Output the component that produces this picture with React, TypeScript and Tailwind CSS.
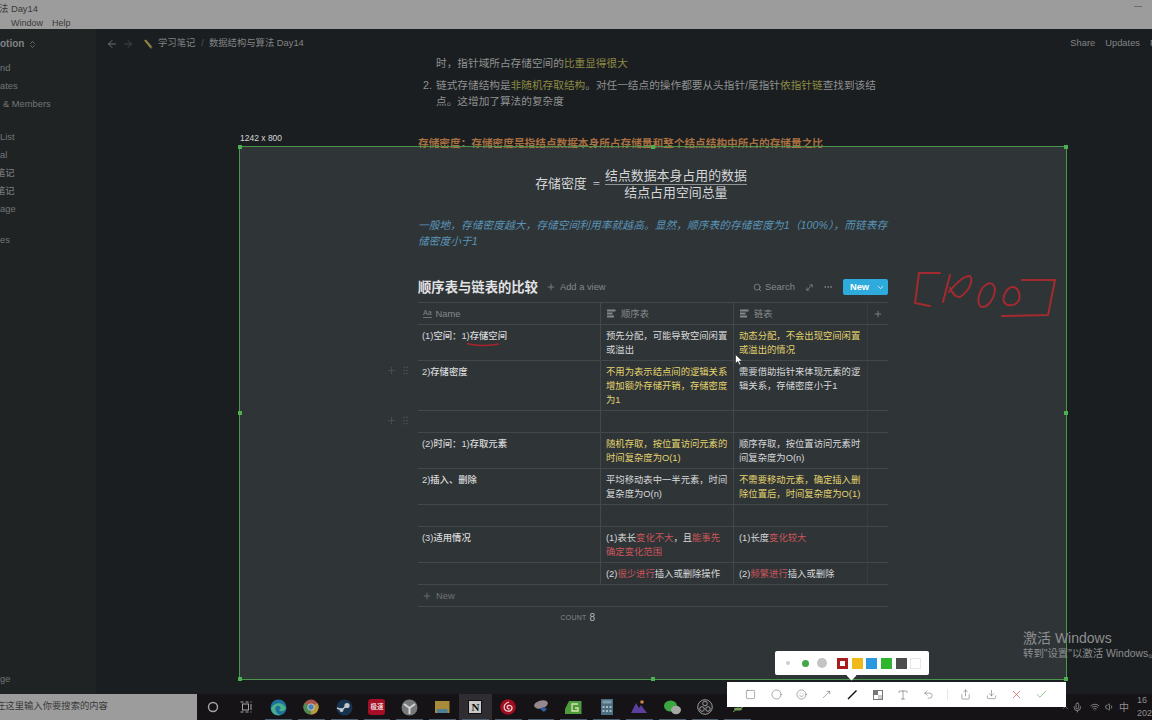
import { ArrowLeft, ArrowRight, Check, ChevronDown, ChevronsUpDown, Circle, Download, GripVertical, MoreHorizontal, MoveDiagonal, MoveUpRight, Plus, Search, Share, Smile, Square, Type, Undo2, X, Mic, Wifi, Volume1, ChevronUp } from 'lucide-react';
import type { ReactNode } from 'react';

const Y = ({ children }: { children: ReactNode }) => <span className="text-[#e2d36e]">{children}</span>;
const R = ({ children }: { children: ReactNode }) => <span className="text-[#c9565b]">{children}</span>;

const ColIcon = () => (
  <svg width="9" height="9" viewBox="0 0 9 9" className="shrink-0" fill="#85888a">
    <rect x="0" y="0.5" width="8.5" height="2" />
    <rect x="0" y="3.5" width="5.5" height="2" />
    <rect x="0" y="6.5" width="7" height="2" />
  </svg>
);

function Row({ h, name, a, b, grip }: { h: string; name?: ReactNode; a?: ReactNode; b?: ReactNode; grip?: boolean }) {
  return (
    <div className={`relative flex border-b border-[#43484b] ${h}`}>
      {grip && (
        <div className="absolute left-[-32px] top-[4px] flex items-center gap-[3px] text-[#4b4f51]">
          <Plus size={11} />
          <GripVertical size={11} />
        </div>
      )}
      <div className="w-[183px] shrink-0 border-r border-[#43484b] pl-[4px] pt-[4px] font-medium">{name}</div>
      <div className="w-[133px] shrink-0 border-r border-[#43484b] pl-[5px] pr-[2px] pt-[4px]">{a}</div>
      <div className="w-[134px] shrink-0 border-r border-[#383d40] pl-[5px] pr-[4px] pt-[4px]">{b}</div>
    </div>
  );
}

const Handle = ({ cls }: { cls: string }) => <div className={`absolute h-[4px] w-[4px] bg-[#4caf50] ${cls}`} />;

function Slot({ children, line = true, active }: { children?: ReactNode; line?: boolean; active?: boolean }) {
  return (
    <div className={`relative flex h-full w-[32.8px] shrink-0 items-center justify-center ${active ? 'bg-[#2f2d31]' : ''}`}>
      {children}
      {line && <div className="absolute bottom-0 left-[3px] right-[3px] h-[1px] bg-[#4f6274]" />}
    </div>
  );
}

export default function App() {
  return (
    <div className="relative flex h-[720px] w-[1152px] flex-col overflow-hidden bg-[#1b1e20] font-['Liberation_Sans','Noto_Sans_CJK_SC',sans-serif]">
      {/* screenshot tool selection, sits behind the page text */}
      <div className="absolute left-[239px] top-[146px] h-[533px] w-[827px] bg-[#2f3437]" />

      {/* title bar */}
      <div className="relative h-[29px] shrink-0 overflow-hidden bg-[#9c9c9c] text-[9px] leading-[14px] text-[#3a3a3a]">
        <div className="-ml-[1px] pt-[2px] text-[9.33px]">法 Day14</div>
        <div className="flex gap-[9px] pl-[11px]">
          <span>Window</span>
          <span>Help</span>
        </div>
        <div className="absolute left-[1134px] top-[6px] h-[1px] w-[8px] bg-[#6a6a6a]" />
      </div>

      <div className="relative flex min-h-0 flex-1">
        {/* sidebar */}
        <aside className="flex w-[96px] shrink-0 flex-col overflow-hidden bg-[#202324] pb-[6px] text-[9.33px] font-medium leading-[18px] text-[#727577]">
          <div className="flex h-[30px] shrink-0 items-center gap-[4px] text-[10px] font-bold text-[#7f8283]">
            otion <ChevronsUpDown size={9} />
          </div>
          <div className="h-[18px]">nd</div>
          <div className="h-[18px]">ates</div>
          <div className="mb-[15px] h-[18px] pl-[3px]">&amp; Members</div>
          <div className="h-[18px]">List</div>
          <div className="h-[18px]">al</div>
          <div className="-ml-[4px] h-[18px]">笔记</div>
          <div className="-ml-[4px] h-[18px]">笔记</div>
          <div className="mb-[13px] h-[18px]">age</div>
          <div className="h-[18px]">es</div>
          <div className="mt-auto h-[18px]">ge</div>
        </aside>

        <main className="relative min-w-0 flex-1">
          {/* breadcrumb bar */}
          <div className="flex h-[26px] items-center overflow-hidden pl-[10px] pt-[4px] text-[9.33px] text-[#818485]">
            <ArrowLeft size={12} strokeWidth={1.6} />
            <ArrowRight size={12} strokeWidth={1.6} className="ml-[4px] text-[#4c4f50]" />
            <svg width="10" height="10" viewBox="0 0 10 10" className="ml-[9px]">
              <path d="M1 1.5 L3 .5 L9 7.5 L7.5 9.5 Z" fill="#8f7f43" />
              <path d="M7.5 9.5 L9 7.5 L9.5 9.5 Z" fill="#555" />
            </svg>
            <span className="ml-[5px]">学习笔记</span>
            <span className="ml-[6px] text-[#55585a]">/</span>
            <span className="ml-[5px]">数据结构与算法 Day14</span>
            <div className="ml-auto flex gap-[10px]">
              <span>Share</span>
              <span>Updates</span>
              <span className="w-[2px] overflow-hidden">F</span>
            </div>
          </div>

          {/* page body */}
          <div className="ml-[322px] w-[470px] text-[10.67px] leading-[16px] text-[#8f9192]">
            <div className="pl-[18px]">
              时，指针域所占存储空间的<span className="text-[#8d8a45]">比重显得很大</span>
            </div>
            <div className="mt-[6px] flex">
              <span className="w-[18px] shrink-0 pl-[5px]">2.</span>
              <div className="w-[446px]">
                链式存储结构是<span className="text-[#8d8a45]">非随机存取结构</span>。对任一结点的操作都要从头指针/尾指针<span className="text-[#8d8a45]">依指针链</span>查找到该结点。这增加了算法的复杂度
              </div>
            </div>
            <div className="mt-[26px] font-bold text-[#a86f42]">存储密度：存储密度是指结点数据本身所占存储量和整个结点结构中所占的存储量之比</div>

            {/* formula */}
            <div className="mt-[12px] flex h-[42px] items-center justify-center pr-[24px] font-['Liberation_Serif','Noto_Sans_CJK_SC',serif] text-[12.9px] text-[#d5d6d7]">
              <span>存储密度</span>
              <span className="ml-[6px]">=</span>
              <div className="ml-[5px] flex flex-col items-center leading-[16px]">
                <div className="border-b border-[#8f9192]">结点数据本身占用的数据</div>
                <div>结点占用空间总量</div>
              </div>
            </div>

            <div className="mt-[12px] italic tracking-[0.1px] text-[#5a94b8]">一般地，存储密度越大，存储空间利用率就越高。显然，顺序表的存储密度为1（100%），而链表存储密度小于1</div>

            {/* database header */}
            <div className="mt-[30px] flex h-[23px] items-start">
              <div className="flex h-[16px] flex-1 items-center">
                <span className="pt-[2px] text-[13.33px] font-bold text-[#e2e3e4]">顺序表与链表的比较</span>
                <Plus size={10} className="ml-[8px] text-[#85888a]" />
                <span className="ml-[4px] text-[9.33px] text-[#85888a]">Add a view</span>
                <div className="ml-auto flex items-center text-[#85888a]">
                  <Search size={9} strokeWidth={2.2} />
                  <span className="ml-[3px] text-[9.5px]">Search</span>
                  <MoveDiagonal size={9} className="ml-[10px]" />
                  <MoreHorizontal size={10} className="ml-[9px]" />
                </div>
              </div>
              <div className="ml-[10px] flex h-[16px] w-[45px] items-center rounded-[2px] bg-[#2eaadc] text-[9.33px] font-bold text-white">
                <span className="flex-1 text-center">New</span>
                <ChevronDown size={9} className="mr-[3px]" />
              </div>
            </div>

            {/* database table */}
            <div className="border-t border-[#43484b] text-[9.33px] leading-[14px] text-[#d8d9da]">
              <div className="flex h-[22px] border-b border-[#43484b] text-[#85888a]">
                <div className="flex w-[183px] shrink-0 items-center border-r border-[#43484b] pl-[5px]">
                  <span className="border-b border-[#6d7072] text-[7px] leading-[8px]">Aa</span>
                  <span className="ml-[4px]">Name</span>
                </div>
                <div className="flex w-[133px] shrink-0 items-center gap-[5px] border-r border-[#43484b] pl-[6px]">
                  <ColIcon />
                  顺序表
                </div>
                <div className="flex w-[134px] shrink-0 items-center gap-[5px] border-r border-[#383d40] pl-[6px]">
                  <ColIcon />
                  链表
                </div>
                <div className="flex flex-1 items-center justify-center">
                  <Plus size={10} />
                </div>
              </div>

              <Row
                h="h-[36px]"
                name={
                  <span className="relative">
                    (1)空间：1)存储空间
                    <svg width="34" height="5" viewBox="0 0 34 5" className="absolute left-[44px] top-[11px]">
                      <path d="M1 1.5 C10 4 24 4 33 2" fill="none" stroke="#a8242c" strokeWidth="1.4" />
                    </svg>
                  </span>
                }
                a="预先分配，可能导致空间闲置或溢出"
                b={<Y>动态分配，不会出现空间闲置或溢出的情况</Y>}
              />
              <Row h="h-[50px]" grip name="2)存储密度" a={<Y>不用为表示结点间的逻辑关系增加额外存储开销，存储密度为1</Y>} b="需要借助指针来体现元素的逻辑关系，存储密度小于1" />
              <Row h="h-[22px]" grip />
              <Row h="h-[36px]" name="(2)时间：1)存取元素" a={<Y>随机存取，按位置访问元素的时间复杂度为O(1)</Y>} b="顺序存取，按位置访问元素时间复杂度为O(n)" />
              <Row h="h-[36px]" name="2)插入、删除" a="平均移动表中一半元素，时间复杂度为O(n)" b={<Y>不需要移动元素，确定插入删除位置后，时间复杂度为O(1)</Y>} />
              <Row h="h-[22px]" />
              <Row
                h="h-[36px]"
                name="(3)适用情况"
                a={
                  <>
                    (1)表长<R>变化不大</R>，且<R>能事先</R>
                    <br />
                    <R>确定变化范围</R>
                  </>
                }
                b={
                  <>
                    (1)长度<R>变化较大</R>
                  </>
                }
              />
              <Row
                h="h-[22px]"
                a={
                  <div className="h-[14px] overflow-hidden whitespace-nowrap">
                    (2)<R>很少进行</R>插入或删除操作
                  </div>
                }
                b={
                  <>
                    (2)<R>频繁进行</R>插入或删除
                  </>
                }
              />
              <div className="flex h-[22px] items-center gap-[4px] border-b border-[#43484b] pl-[4px] text-[#6f7375]">
                <Plus size={10} />
                New
              </div>
              <div className="flex h-[22px] w-[177px] items-center justify-end gap-[3px] text-[#85888a]">
                <span className="text-[7px] tracking-[0.2px]">COUNT</span>
                <span className="text-[10px] text-[#b5b7b8]">8</span>
              </div>
            </div>
          </div>
        </main>
      </div>

      {/* taskbar */}
      <div className="relative flex h-[26px] shrink-0 items-center bg-[#161316]">
        <div className="flex h-full w-[197px] shrink-0 items-center overflow-hidden bg-[#9c9c9c] text-[9.33px] text-[#3a3a3a]">
          <span className="-ml-[4px] whitespace-nowrap">在这里输入你要搜索的内容</span>
        </div>
        <div className="flex h-full -ml-[0.4px]">
          <Slot line={false}>
            <svg width="12" height="12" viewBox="0 0 12 12">
              <circle cx="6" cy="6" r="4.5" fill="none" stroke="#a5a5a5" strokeWidth="1.4" />
            </svg>
          </Slot>
          <Slot line={false}>
            <svg width="12" height="12" viewBox="0 0 12 12" fill="none" stroke="#a5a5a5">
              <rect x="2.5" y="3" width="6" height="6" />
              <path d="M0.5 1h11M0.5 11h11" strokeDasharray="3 2" />
              <path d="M11 3v6" />
            </svg>
          </Slot>
          <Slot>
            <svg width="17" height="17" viewBox="0 0 17 17">
              <circle cx="8.5" cy="8.5" r="8" fill="#1f6f9c" />
              <path d="M1 10 C3 3 13 2 16 9 C15 13 10 13 9 11 C12 10 10 6 7 7 C4 8 5 14 10 16 C5 17 2 14 1 10Z" fill="#49b08c" />
            </svg>
          </Slot>
          <Slot>
            <svg width="16" height="16" viewBox="0 0 16 16">
              <circle cx="8" cy="8" r="7.5" fill="#a9544b" />
              <path d="M8 8 L14.5 4 A7.5 7.5 0 0 1 8 15.5 Z" fill="#b79b3a" />
              <path d="M8 8 L8 15.5 A7.5 7.5 0 0 1 1.5 4 Z" fill="#4d8a55" />
              <circle cx="8" cy="8" r="3.6" fill="#ccc" />
              <circle cx="8" cy="8" r="2.7" fill="#4a7fb5" />
            </svg>
          </Slot>
          <Slot>
            <svg width="17" height="17" viewBox="0 0 17 17">
              <circle cx="8.5" cy="8.5" r="8" fill="#16334f" />
              <circle cx="11" cy="6.5" r="2.6" fill="#c5c8ca" />
              <circle cx="5.5" cy="11" r="2" fill="#c5c8ca" />
              <path d="M1 9 L6 11 L10 7" stroke="#c5c8ca" strokeWidth="1.4" fill="none" />
            </svg>
          </Slot>
          <Slot>
            <div className="flex h-[16px] w-[17px] items-center justify-center rounded-[3px] bg-[#a50e25] text-[6.5px] font-bold text-[#e8d9d9]">极速</div>
          </Slot>
          <Slot>
            <svg width="17" height="17" viewBox="0 0 17 17">
              <circle cx="8.5" cy="8.5" r="8" fill="#77797b" />
              <path d="M8.5 9 L3 5 M8.5 9 L14 5 M8.5 9 L8.5 15" stroke="#d2d2d2" strokeWidth="2" />
            </svg>
          </Slot>
          <Slot>
            <svg width="15" height="14" viewBox="0 0 15 14">
              <path d="M0 1h14.5v12H0z" fill="#a88a38" />
              <path d="M2 9h10.5v4H2z" fill="#4d7f95" />
            </svg>
          </Slot>
          <Slot active>
            <div className="flex h-[14px] w-[14px] items-center justify-center border border-[#111] bg-[#c9c9c9] font-['Liberation_Serif',serif] text-[11px] font-bold leading-none text-[#111]">N</div>
          </Slot>
          <Slot>
            <svg width="16" height="16" viewBox="0 0 16 16">
              <circle cx="8" cy="8" r="7.8" fill="#a10d20" />
              <path d="M9 3 C5 4 3.5 7 4.5 10 C6 13 11 13 12 9.5 C12.5 7 9.5 5.5 7.5 7 C6.5 8.5 8 10.5 9.5 9.5" fill="none" stroke="#f0dada" strokeWidth="1.2" />
            </svg>
          </Slot>
          <Slot>
            <svg width="18" height="16" viewBox="0 0 18 16">
              <ellipse cx="9" cy="5.5" rx="7" ry="4" fill="#95898c" transform="rotate(-15 9 5.5)" />
              <path d="M8 10 L12 13 L15 10 L11 8Z" fill="#2e5f9e" />
            </svg>
          </Slot>
          <Slot>
            <svg width="17" height="15" viewBox="0 0 17 15">
              <path d="M4 1 H16.5 V14 H0 V9Z" fill="#4f9a3d" />
              <path d="M13 4 H7 V11 H13 V8 H10" fill="none" stroke="#d9e5b0" strokeWidth="1.3" />
            </svg>
          </Slot>
          <Slot>
            <svg width="12" height="16" viewBox="0 0 12 16">
              <rect width="12" height="16" fill="#4d6e80" />
              <rect x="1.5" y="1.5" width="9" height="3" fill="#7f9cab" />
              <path d="M1.5 7h2v2h-2zM5 7h2v2H5zM8.5 7h2v2h-2zM1.5 11h2v2h-2zM5 11h2v2H5zM8.5 11h2v2h-2z" fill="#a9bcc6" />
            </svg>
          </Slot>
          <Slot>
            <svg width="16" height="14" viewBox="0 0 16 14">
              <path d="M0 13 L5 3 L8 8 L10 5 L16 13Z" fill="#5a3f9e" />
              <circle cx="11" cy="2" r="1.8" fill="#c9854a" />
            </svg>
          </Slot>
          <Slot>
            <svg width="17" height="15" viewBox="0 0 17 15">
              <ellipse cx="6.5" cy="6" rx="6.5" ry="5.5" fill="#3aa83f" />
              <ellipse cx="12" cy="10" rx="5" ry="4.2" fill="#a5a9a5" />
            </svg>
          </Slot>
          <Slot>
            <svg width="16" height="16" viewBox="0 0 16 16" fill="none" stroke="#9a9a9a">
              <circle cx="8" cy="8" r="7.3" fill="#1c1c1f" />
              <circle cx="8" cy="4.5" r="2.3" />
              <circle cx="5" cy="10" r="2.3" />
              <circle cx="11" cy="10" r="2.3" />
            </svg>
          </Slot>
          <Slot>
            <svg width="14" height="14" viewBox="0 0 14 14" fill="#6f9a5a">
              <ellipse cx="7" cy="9" rx="4" ry="1.5" />
              <path d="M2 12 L6 9 M12 7 L8 9" stroke="#6f9a5a" />
            </svg>
          </Slot>
        </div>
        {/* system tray */}
        <div className="absolute left-[1059px] top-0 flex h-full w-[93px] items-center overflow-hidden text-[#8f8f8f]">
          <ChevronUp size={9} className="ml-[2px]" />
          <Mic size={11} className="ml-[2px]" />
          <Wifi size={10} className="ml-[8px]" />
          <Volume1 size={10} className="ml-[5px]" />
          <span className="ml-[4px] text-[10px]">中</span>
          <div className="ml-[8px] text-[9px] leading-[13px]">
            <div>16</div>
            <div className="whitespace-nowrap">202</div>
          </div>
        </div>
      </div>

      {/* selection frame and handles */}
      <div className="absolute left-[239px] top-[146px] h-[534px] w-[828px] border border-[#4a964a]">
        <Handle cls="-left-[2px] -top-[2px]" />
        <Handle cls="left-[411px] -top-[2px]" />
        <Handle cls="-right-[2px] -top-[2px]" />
        <Handle cls="-left-[2px] top-[264px]" />
        <Handle cls="-right-[2px] top-[264px]" />
        <Handle cls="-left-[2px] -bottom-[2px]" />
        <Handle cls="left-[411px] -bottom-[2px]" />
        <Handle cls="-right-[2px] -bottom-[2px]" />
      </div>
      <div className="absolute left-[240px] top-[133px] text-[8.5px] leading-[11px] text-[#d6d6d6]">1242 x 800</div>

      {/* pen scribble */}
      <svg width="150" height="52" viewBox="0 0 150 52" className="absolute left-[910px] top-[268px]" fill="none" stroke="#a32a2e" strokeWidth="2" strokeLinecap="round" strokeLinejoin="round">
        <path d="M30 5 L9 5 L5 35 L20 38" />
        <path d="M40 7 L33 34" />
        <path d="M39 24 C46 15 55 7 60 8 C64 14 58 24 50 29 C45 30 42 24 40 20" />
        <path d="M77 16 C70 20 66 33 70 38 C76 42 84 32 85 22 C85 16 80 14 77 16Z" />
        <path d="M102 19 C97 20 92 28 94 34 C97 39 106 38 109 32 C111 25 107 18 102 19Z" />
        <path d="M112 12 L145 12 L138 47 L92 48" />
      </svg>

      {/* mouse cursor */}
      <svg width="8" height="12" viewBox="0 0 8 12" className="absolute left-[735px] top-[354px]">
        <path d="M0.5 0.5 V9.5 L2.8 7.5 L4.3 11 L5.8 10.3 L4.3 7 H7.3 Z" fill="#fff" stroke="#222" strokeWidth="0.6" />
      </svg>

      {/* windows watermark */}
      <div className="absolute left-[1023px] top-[629px] whitespace-nowrap text-[#8d8f90]">
        <div className="text-[14px] leading-[18px]">激活 Windows</div>
        <div className="text-[10.4px] leading-[14px]">转到"设置"以激活 Windows。</div>
      </div>

      {/* colour picker */}
      <div className="absolute left-[775px] top-[651px] flex h-[24px] w-[154px] items-center rounded-[2px] bg-white pl-[4.5px]">
        <div className="flex w-[17px] justify-center"><div className="h-[4px] w-[4px] rounded-full bg-[#cfcfcf]" /></div>
        <div className="flex w-[17px] justify-center"><div className="h-[7px] w-[7px] rounded-full bg-[#43a843]" /></div>
        <div className="flex w-[17px] justify-center"><div className="h-[10px] w-[10px] rounded-full bg-[#c4c4c4]" /></div>
        <div className="ml-[6.5px] flex items-center gap-[3.7px]">
          <div className="flex h-[11px] w-[11px] items-center justify-center bg-[#a81c1f]"><div className="h-[5px] w-[5px] bg-white" /></div>
          <div className="h-[11px] w-[11px] bg-[#f0b91a]" />
          <div className="h-[11px] w-[11px] bg-[#2b98e0]" />
          <div className="h-[11px] w-[11px] bg-[#2fb52f]" />
          <div className="h-[11px] w-[11px] bg-[#4d4d4d]" />
          <div className="h-[11px] w-[11px] border border-[#e8e8e8] bg-white" />
        </div>
        <div className="absolute left-[73px] top-[21px] h-[7px] w-[7px] rotate-45 bg-white" />
      </div>

      {/* capture toolbar */}
      <div className="absolute left-[727px] top-[682px] flex h-[25px] w-[339px] items-center bg-white pl-[11px] text-[#666]">
        {[
          <Square key="s" size={11} strokeWidth={1.2} />,
          <Circle key="c" size={11} strokeWidth={1.2} />,
          <Smile key="e" size={11} strokeWidth={1.2} />,
          <MoveUpRight key="a" size={11} strokeWidth={1.2} />,
          <svg key="p" width="11" height="11" viewBox="0 0 11 11"><path d="M1 10 L9.5 1.5" stroke="#111" strokeWidth="1.4" /></svg>,
          <svg key="m" width="10" height="10" viewBox="0 0 10 10"><rect x=".5" y=".5" width="9" height="9" fill="#fff" stroke="#777" /><rect x="1" y="1" width="4" height="4" fill="#777" /><rect x="5" y="5" width="4" height="4" fill="#ccc" /></svg>,
          <Type key="t" size={12} strokeWidth={1.2} />,
          <Undo2 key="u" size={11} strokeWidth={1.2} />,
        ].map((icon) => (
          <div key={icon.key} className="flex w-[25.4px] justify-center">{icon}</div>
        ))}
        <div className="flex w-[12px] justify-center"><div className="h-[11px] w-[1px] bg-[#e6e6e6]" /></div>
        <div className="flex w-[25.4px] justify-center"><Share size={11} strokeWidth={1.2} /></div>
        <div className="flex w-[25.4px] justify-center"><Download size={11} strokeWidth={1.2} /></div>
        <div className="flex w-[25.4px] justify-center"><X size={13} strokeWidth={1.2} className="text-[#c44a4a]" /></div>
        <div className="flex w-[25.4px] justify-center"><Check size={13} strokeWidth={1.2} className="text-[#4caf50]" /></div>
      </div>
    </div>
  );
}
